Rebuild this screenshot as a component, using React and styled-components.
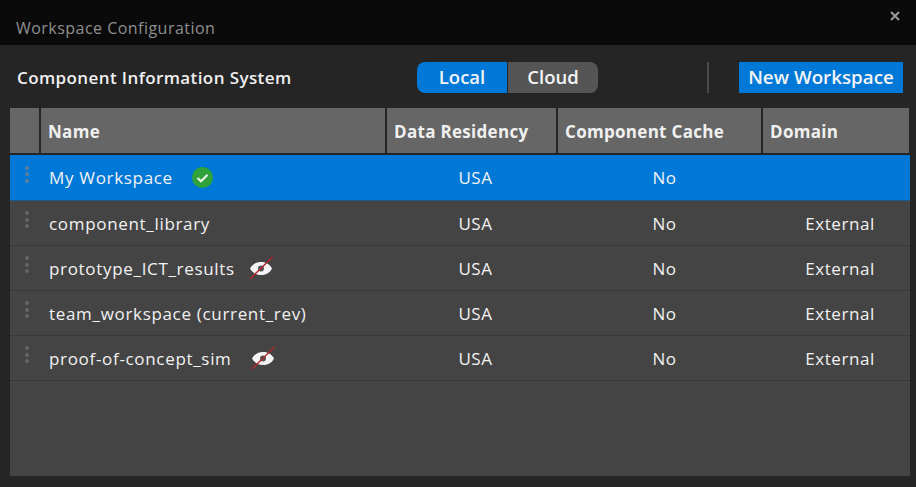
import styled, { createGlobalStyle } from "styled-components";

const GlobalStyle = createGlobalStyle`
  html, body {
    margin: 0;
    padding: 0;
    background: #252525;
  }
  * {
    box-sizing: border-box;
  }
`;

const columns = "31px 346px 171px 205px 1fr";

const workspaces = [
  { name: "My Workspace", badge: "active", gap: 19, selected: true },
  { name: "component_library", domain: "External" },
  { name: "prototype_ICT_results", badge: "hidden", gap: 14, domain: "External" },
  { name: "team_workspace (current_rev)", domain: "External" },
  { name: "proof-of-concept_sim", badge: "hidden", gap: 19, domain: "External" },
];

const Dialog = styled.div`
  width: 916px;
  height: 487px;
  overflow: hidden;
  display: flex;
  flex-direction: column;
  background: #252525;
  font-family: "Open Sans", "Noto Sans", sans-serif;
`;

const TitleBar = styled.div`
  height: 45px;
  flex: none;
  display: flex;
  justify-content: space-between;
  padding: 18px 16px 0 16px;
  background: #0a0a0a;
  color: #8f8f8f;
  font-size: 16px;
  letter-spacing: 0.47px;
  line-height: 20px;
`;

const CloseIcon = styled.svg`
  width: 10px;
  height: 10px;
  margin-top: -7px;
`;

const Toolbar = styled.div`
  height: 63px;
  flex: none;
  display: flex;
  align-items: center;
  padding: 1px 13px 0 17px;
`;

const SystemName = styled.div`
  width: 400px;
  color: #f0f0f0;
  font-size: 17px;
  font-weight: 600;
  letter-spacing: 0.4px;
`;

const Segmented = styled.div`
  display: flex;
  gap: 1px;
`;

const Segment = styled.button`
  width: 90px;
  height: 31px;
  padding: 0 0 2px;
  border: 0;
  border-radius: ${(p) => (p.$active ? "8px 0 0 8px" : "0 8px 8px 0")};
  background: ${(p) => (p.$active ? "#0078d7" : "#555555")};
  color: #f4f4f4;
  font-family: inherit;
  font-size: 18.5px;
  font-weight: 600;
`;

const Divider = styled.div`
  width: 2px;
  height: 31px;
  margin-left: 109px;
  background: #4a4a4a;
`;

const NewButton = styled.button`
  width: 164px;
  height: 31px;
  margin-left: 30px;
  padding: 0;
  border: 0;
  background: #0078d7;
  color: #f4f4f4;
  font-family: inherit;
  font-size: 18.8px;
  font-weight: 600;
`;

const Table = styled.div`
  height: 368px;
  flex: none;
  margin: 0 6px 0 10px;
  background: #444444;
  display: flex;
  flex-direction: column;
`;

const HeaderRow = styled.div`
  height: 47px;
  flex: none;
  display: grid;
  grid-template-columns: ${columns};
  padding: 0 1px 2px 0;
  background: #252525;
`;

const HeaderCell = styled.div`
  display: flex;
  align-items: center;
  padding: 1px 0 0 7px;
  background: #666666;
  border-right: 2px solid #252525;
  color: #f0f0f0;
  font-size: 17px;
  font-weight: 700;
  letter-spacing: 0.3px;

  &:last-child {
    border-right: 0;
  }
`;

const Row = styled.div`
  height: ${(p) => (p.$selected ? 46 : 45)}px;
  flex: none;
  display: grid;
  grid-template-columns: ${columns};
  align-items: center;
  background: ${(p) => (p.$selected ? "#0078d7" : "#444444")};
  border-bottom: 1px solid ${(p) => (p.$selected ? "#1c5a8c" : "#383838")};
  color: #f2f2f2;
  font-size: 17px;
  letter-spacing: 0.58px;
`;

const GripCell = styled.div`
  display: flex;
  flex-direction: column;
  align-items: center;
  gap: 2.5px;
  padding-left: 3px;
  margin-top: -7px;
`;

const Dot = styled.span`
  width: 4px;
  height: 4px;
  border-radius: 50%;
  background: ${(p) => (p.$selected ? "#5f7f9b" : "#666666")};
`;

const NameCell = styled.div`
  display: flex;
  align-items: center;
  gap: ${(p) => p.$gap || 0}px;
  padding-left: 8px;
  white-space: nowrap;
  letter-spacing: 0.68px;
`;

const ValueCell = styled.div`
  text-align: center;
  padding-left: ${(p) => p.$shift}px;
`;

const CheckBadge = () => (
  <svg width="21" height="21" viewBox="0 0 21 21">
    <circle cx="10.500" cy="10.500" r="10.500" fill="#2fa23a" />
    <path d="M5.500 11l3.500 3.200 6.500-6.500" fill="none" stroke="#e8f4e8" strokeWidth="2.200" />
  </svg>
);

const HiddenBadge = () => (
  <svg width="25" height="24" viewBox="0 0 25 24">
    <path d="M1 12.500C4 7.500 8 6 12 6s8.500 1.500 11 6.500c-2.500 5-7 6.500-11 6.500s-8-1.500-11-6.500z" fill="#f4f4f4" />
    <circle cx="12" cy="12.500" r="3" fill="#555555" />
    <path d="M1 23L23.500 1" stroke="#b3262c" strokeWidth="1.400" />
  </svg>
);

export default function App() {
  return (
    <>
      <GlobalStyle />
      <Dialog>
        <TitleBar>
          Workspace Configuration
          <CloseIcon viewBox="0 0 10 10">
            <path d="M1 1l8 8M9 1l-8 8" stroke="#9a9a9a" strokeWidth="2" />
          </CloseIcon>
        </TitleBar>
        <Toolbar>
          <SystemName>Component Information System</SystemName>
          <Segmented>
            <Segment $active>Local</Segment>
            <Segment>Cloud</Segment>
          </Segmented>
          <Divider />
          <NewButton>New Workspace</NewButton>
        </Toolbar>
        <Table>
          <HeaderRow>
            <HeaderCell />
            <HeaderCell>Name</HeaderCell>
            <HeaderCell>Data Residency</HeaderCell>
            <HeaderCell>Component Cache</HeaderCell>
            <HeaderCell>Domain</HeaderCell>
          </HeaderRow>
          {workspaces.map((w) => (
            <Row key={w.name} $selected={w.selected}>
              <GripCell>
                <Dot $selected={w.selected} />
                <Dot $selected={w.selected} />
                <Dot $selected={w.selected} />
              </GripCell>
              <NameCell $gap={w.gap}>
                {w.name}
                {w.badge === "active" && <CheckBadge />}
                {w.badge === "hidden" && <HiddenBadge />}
              </NameCell>
              <ValueCell $shift={6}>USA</ValueCell>
              <ValueCell $shift={8}>No</ValueCell>
              <ValueCell $shift={7}>{w.domain}</ValueCell>
            </Row>
          ))}
        </Table>
      </Dialog>
    </>
  );
}
